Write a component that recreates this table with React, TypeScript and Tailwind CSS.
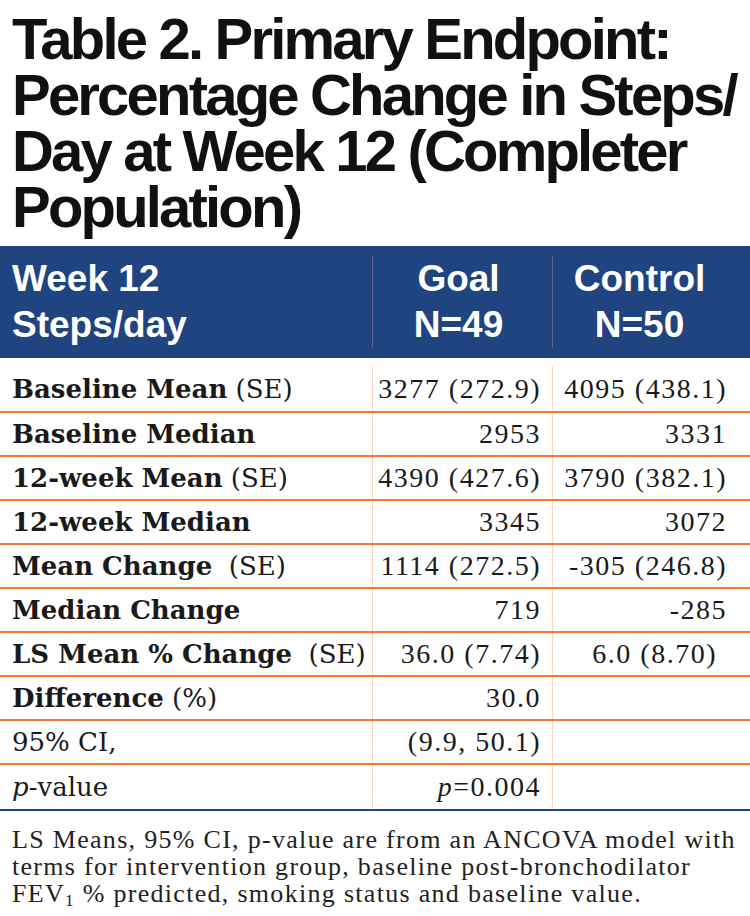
import React from "react";

type Row = {
  label: React.ReactNode;
  goal: React.ReactNode;
  control?: React.ReactNode;
  controlPad?: string;
};

const rows: Row[] = [
  {
    label: (
      <>
        <b>Baseline Mean</b> (SE)
      </>
    ),
    goal: "3277 (272.9)",
    control: "4095 (438.1)",
  },
  { label: <b>Baseline Median</b>, goal: "2953", control: "3331" },
  {
    label: (
      <>
        <b>12-week Mean</b> (SE)
      </>
    ),
    goal: "4390 (427.6)",
    control: "3790 (382.1)",
  },
  { label: <b>12-week Median</b>, goal: "3345", control: "3072" },
  {
    label: (
      <>
        <b>Mean Change</b>{"  "}(SE)
      </>
    ),
    goal: "1114 (272.5)",
    control: "-305 (246.8)",
  },
  { label: <b>Median Change</b>, goal: "719", control: "-285" },
  {
    label: (
      <>
        <b>LS Mean % Change</b>{"  "}(SE)
      </>
    ),
    goal: "36.0 (7.74)",
    control: "6.0 (8.70)",
    controlPad: "pr-[33px]",
  },
  {
    label: (
      <>
        <b>Difference</b> (%)
      </>
    ),
    goal: "30.0",
  },
  { label: "95% CI,", goal: "(9.9, 50.1)" },
  {
    label: (
      <>
        <i>p</i>-value
      </>
    ),
    goal: (
      <>
        <i>p</i>=0.004
      </>
    ),
  },
];

const App: React.FC = () => {
  return (
    <div className="w-[750px] bg-white text-[#1a1a1a]">
      <h1 className="whitespace-nowrap pl-3 pt-[11px] font-['Liberation_Sans',Arial,sans-serif] text-[58px] font-bold leading-[56px] tracking-[-2.8px] text-[#111]">
        Table 2. Primary Endpoint:
        <br />
        Percentage Change in Steps/
        <br />
        Day at Week 12 (Completer
        <br />
        Population)
      </h1>

      <div className="mt-[11px]">
        {/* header */}
        <div className="grid grid-cols-[372px_180px_198px] bg-[#1f4480] py-[10px] font-['Liberation_Sans',Arial,sans-serif] text-[37px] font-bold leading-[46px] text-white">
          <div className="pl-3">
            Week 12
            <br />
            Steps/day
          </div>
          <div className="border-l border-[#6d6189] pr-2 text-center">
            Goal
            <br />
            N=49
          </div>
          <div className="border-l border-[#6d6189] pr-6 text-center">
            Control
            <br />
            N=50
          </div>
        </div>

        {/* body */}
        <div className="border-b-2 border-[#1f4480]">
          {rows.map((r, i) => (
            <div
              key={i}
              className={`grid grid-cols-[372px_180px_198px] ${
                i === 0 ? "h-[55px] pt-[8px]" : "h-[44px]"
              } ${i < rows.length - 1 ? "border-b-2 border-[#f47a3a]" : ""}`}
            >
              <div className="flex items-center whitespace-pre pl-3 font-['DejaVu_Serif',serif] text-[26px] leading-[26px]">
                <span>{r.label}</span>
              </div>
              <div className="flex items-center justify-end border-l border-[#fbd7c1] pr-[11px] font-['Liberation_Serif',serif] text-[28px] leading-[26px] tracking-[1.5px]">
                <span>{r.goal}</span>
              </div>
              <div
                className={`flex items-center justify-end border-l border-[#fbd7c1] font-['Liberation_Serif',serif] text-[28px] leading-[26px] tracking-[1.5px] ${
                  r.controlPad || "pr-[23px]"
                }`}
              >
                <span>{r.control}</span>
              </div>
            </div>
          ))}
        </div>
      </div>

      <p className="whitespace-nowrap pl-3 pt-[15px] font-['Liberation_Serif',serif] text-[26px] leading-[27px] tracking-[1.3px] text-[#222]">
        LS Means, 95% CI, p-value are from an ANCOVA model with
        <br />
        terms for intervention group, baseline post-bronchodilator
        <br />
        FEV<sub className="text-[17px] leading-none">1</sub> % predicted,
        smoking status and baseline value.
      </p>
    </div>
  );
};

export default App;
